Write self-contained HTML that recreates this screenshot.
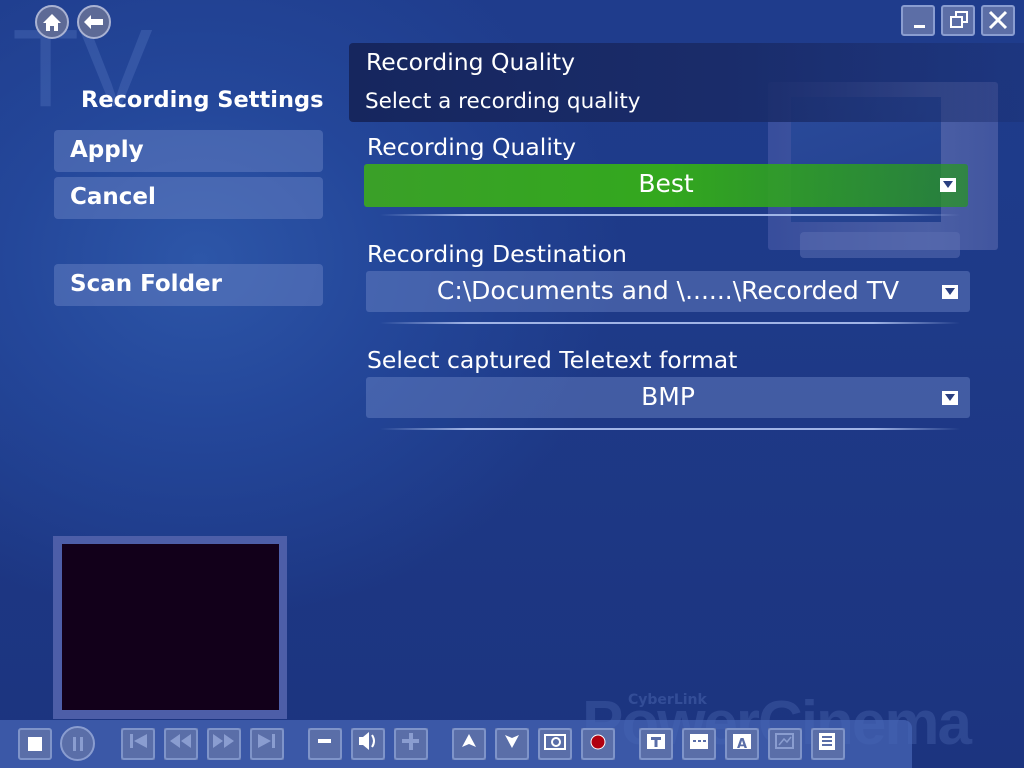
<!DOCTYPE html>
<html><head><meta charset="utf-8"><style>
*{margin:0;padding:0;box-sizing:border-box}
body{width:1024px;height:768px;overflow:hidden;position:relative;font-family:"DejaVu Sans","Liberation Sans",sans-serif;color:#fff;
background:radial-gradient(ellipse 420px 360px at 200px 260px,#2d56a8 0%,#24479a 45%,rgba(30,53,128,0) 100%),linear-gradient(180deg,#1f3c8c 0%,#1e3a88 40%,#1c347f 100%);}
.abs{position:absolute}
.lbtn{position:absolute;left:54px;width:269px;height:42px;background:rgba(110,135,200,.45);border-radius:4px;font-weight:bold;font-size:23px;padding-left:16px;line-height:40px}
.lbl{position:absolute;left:367px;font-size:23.5px}
.dd{position:absolute;left:366px;width:604px;height:41px;border-radius:3px;background:rgba(110,135,200,.45);font-size:25px;text-align:center;line-height:39px}
.arr{position:absolute;right:12px;top:14px;width:16px;height:14px;background:#fff}
.arr:after{content:"";position:absolute;left:3px;top:3px;border-left:5px solid transparent;border-right:5px solid transparent;border-top:7px solid #2a3f80}
.sep{position:absolute;left:380px;width:580px;height:2px;background:linear-gradient(90deg,rgba(160,180,230,0),#a0b4e6 15%,#a0b4e6 85%,rgba(160,180,230,0))}
.tb{position:absolute;top:728px;width:34px;height:32px;border:2px solid #7f94c9;border-radius:3px}
.wb{position:absolute;top:5px;width:34px;height:31px;border:2px solid #8a9dd0;border-radius:3px;background:#5c6ea6}
</style></head><body>
<div class="abs" style="left:12px;top:14px;font-size:110px;color:rgba(120,150,220,.22);font-family:'Liberation Sans',sans-serif;line-height:110px">TV</div>
<div class="abs" style="left:768px;top:82px;width:230px;height:168px;background:linear-gradient(90deg,#3e52a0,#5668ac 70%,#4a5ca4);opacity:.8;border-radius:3px"></div>
<div class="abs" style="left:791px;top:97px;width:150px;height:125px;background:linear-gradient(160deg,#2a4a9a,#23408e)"></div>
<div class="abs" style="left:800px;top:232px;width:160px;height:26px;background:#5b6db0;opacity:.55;border-radius:4px"></div>
<svg class="abs" style="left:34px;top:4px" width="80" height="38">
<circle cx="18" cy="18" r="16" fill="#5d6a96" stroke="#aab3d3" stroke-width="2"/>
<path d="M9 19 L18 10 L27 19 L24 19 L24 27 L20 27 L20 22 L16 22 L16 27 L12 27 L12 19Z" fill="#fff"/>
<circle cx="60" cy="18" r="16" fill="#5d6a96" stroke="#aab3d3" stroke-width="2"/>
<path d="M50 18 L57 11 L57 15 L69 15 L69 21 L57 21 L57 25Z" fill="#fff"/>
</svg>
<div class="abs" style="left:81px;top:87px;font-size:22.5px;font-weight:bold">Recording Settings</div>
<div class="lbtn" style="top:130px">Apply</div>
<div class="lbtn" style="top:177px">Cancel</div>
<div class="lbtn" style="top:264px">Scan Folder</div>
<div class="wb" style="left:901px"><div class="abs" style="left:11px;top:18px;width:11px;height:3px;background:#fff"></div></div>
<div class="wb" style="left:941px"><div class="abs" style="left:12px;top:4px;width:13px;height:12px;border:2px solid #fff"></div><div class="abs" style="left:7px;top:9px;width:13px;height:12px;border:2px solid #fff;background:#5c6ea6"></div></div>
<div class="wb" style="left:981px"><svg width="30" height="27"><path d="M7 5L23 21M23 5L7 21" stroke="#fff" stroke-width="3"/></svg></div>
<div class="abs" style="left:349px;top:43px;width:675px;height:79px;background:linear-gradient(90deg,#16265e,#1a2c6a 55%,rgba(26,44,106,.35));border-radius:4px 0 0 4px"></div>
<div class="abs" style="left:366px;top:48px;font-size:23.5px">Recording Quality</div>
<div class="abs" style="left:365px;top:89px;font-size:21.5px">Select a recording quality</div>
<div class="lbl" style="top:133px">Recording Quality</div>
<div class="dd" style="top:164px;left:364px;height:43px;background:linear-gradient(90deg,#3aa028,#33a81e 50%,rgba(40,150,30,.7));">Best<div class="arr"></div></div>
<div class="sep" style="top:214px"></div>
<div class="lbl" style="top:240px">Recording Destination</div>
<div class="dd" style="top:271px">C:\Documents and \......\Recorded TV<div class="arr"></div></div>
<div class="sep" style="top:322px"></div>
<div class="lbl" style="top:346px">Select captured Teletext format</div>
<div class="dd" style="top:377px">BMP<div class="arr"></div></div>
<div class="sep" style="top:428px"></div>
<div class="abs" style="left:53px;top:536px;width:234px;height:183px;background:#4d5ea8"></div>
<div class="abs" style="left:62px;top:544px;width:217px;height:166px;background:#12001a"></div>
<div class="abs" style="left:628px;top:692px;font-size:14px;font-weight:bold;color:rgba(120,150,220,.25)">CyberLink</div>
<div class="abs" style="left:582px;top:688px;font-size:62px;font-weight:bold;color:rgba(90,115,190,.3);letter-spacing:-2px;font-family:'Liberation Sans',sans-serif">PowerCinema</div>
<div class="abs" style="left:0;top:720px;width:912px;height:48px;background:rgba(70,100,180,.75);border-radius:0 8px 0 0"></div>
<div class="tb" style="left:18px;background:#5a6ea8"><div class="abs" style="left:8px;top:7px;width:14px;height:14px;background:#fff"></div></div>
<div class="abs" style="left:60px;top:726px;width:35px;height:35px;border:2px solid #8a9dd0;border-radius:50%;background:#5a6ea8"><div class="abs" style="left:11px;top:9px;width:3px;height:14px;background:#8a9dd0"></div><div class="abs" style="left:18px;top:9px;width:3px;height:14px;background:#8a9dd0"></div></div>
<svg class="abs" style="left:0;top:720px" width="900" height="48">
<g fill="#5a6ea8">
<rect x="121" y="8" width="34" height="32"/><rect x="164" y="8" width="34" height="32"/><rect x="207" y="8" width="34" height="32"/><rect x="250" y="8" width="34" height="32"/>
<rect x="308" y="8" width="34" height="32"/><rect x="351" y="8" width="34" height="32"/><rect x="394" y="8" width="34" height="32"/>
<rect x="452" y="8" width="34" height="32"/><rect x="495" y="8" width="34" height="32"/><rect x="538" y="8" width="34" height="32"/><rect x="581" y="8" width="34" height="32"/>
<rect x="639" y="8" width="34" height="32"/><rect x="682" y="8" width="34" height="32"/><rect x="725" y="8" width="34" height="32"/><rect x="768" y="8" width="34" height="32"/><rect x="811" y="8" width="34" height="32"/>
</g>
<g fill="#8a9dd0">
<path d="M130 14h3v14h-3zM147 14L134 21L147 28Z"/>
<path d="M180 14L170 21L180 28ZM191 14L181 21L191 28Z"/>
<path d="M213 14L223 21L213 28ZM224 14L234 21L224 28Z"/>
<path d="M258 14L271 21L258 28ZM272 14h3v14h-3z"/>
<rect x="402" y="19" width="17" height="4"/><rect x="409" y="13" width="4" height="17"/>
</g>
<g fill="#fff">
<rect x="318" y="19" width="13" height="4"/>
<path d="M359 17h4l6-5v18l-6-5h-4z"/><path d="M372 15q4 6 0 12" stroke="#fff" stroke-width="2" fill="none"/>
<path d="M462 27L469 14L476 27L469 24Z"/>
<path d="M505 15L512 28L519 15L512 18Z"/>
<rect x="545" y="15" width="20" height="14" fill="none" stroke="#fff" stroke-width="2"/><circle cx="556" cy="22" r="4" fill="none" stroke="#fff" stroke-width="2"/>
<rect x="647" y="14" width="18" height="15"/>
<rect x="690" y="14" width="18" height="15"/>
<rect x="733" y="14" width="18" height="15"/>
<rect x="819" y="13" width="16" height="17"/>
</g>
<circle cx="598" cy="22" r="7" fill="#b00010" stroke="#fff" stroke-width="1"/>
<path d="M651 17h10v3h-3.5v7h-3v-7h-3.5z" fill="#5a6ea8"/>
<path d="M693 21h3M698 21h3M703 21h3" stroke="#5a6ea8" stroke-width="2"/>
<text x="737" y="28" font-size="13" font-weight="bold" fill="#5a6ea8" font-family="DejaVu Sans">A</text>
<rect x="776" y="14" width="17" height="14" fill="none" stroke="#8a9dd0" stroke-width="2"/>
<path d="M779 25l5-6 3 3 4-5" stroke="#8a9dd0" stroke-width="1.5" fill="none"/>
<path d="M822 17h10M822 21h10M822 25h10" stroke="#5a6ea8" stroke-width="2"/>
</svg>
<div class="tb" style="left:121px"></div><div class="tb" style="left:164px"></div><div class="tb" style="left:207px"></div><div class="tb" style="left:250px"></div>
<div class="tb" style="left:308px"></div><div class="tb" style="left:351px"></div><div class="tb" style="left:394px"></div>
<div class="tb" style="left:452px"></div><div class="tb" style="left:495px"></div><div class="tb" style="left:538px"></div><div class="tb" style="left:581px"></div>
<div class="tb" style="left:639px"></div><div class="tb" style="left:682px"></div><div class="tb" style="left:725px"></div><div class="tb" style="left:768px"></div><div class="tb" style="left:811px"></div>
</body></html>
